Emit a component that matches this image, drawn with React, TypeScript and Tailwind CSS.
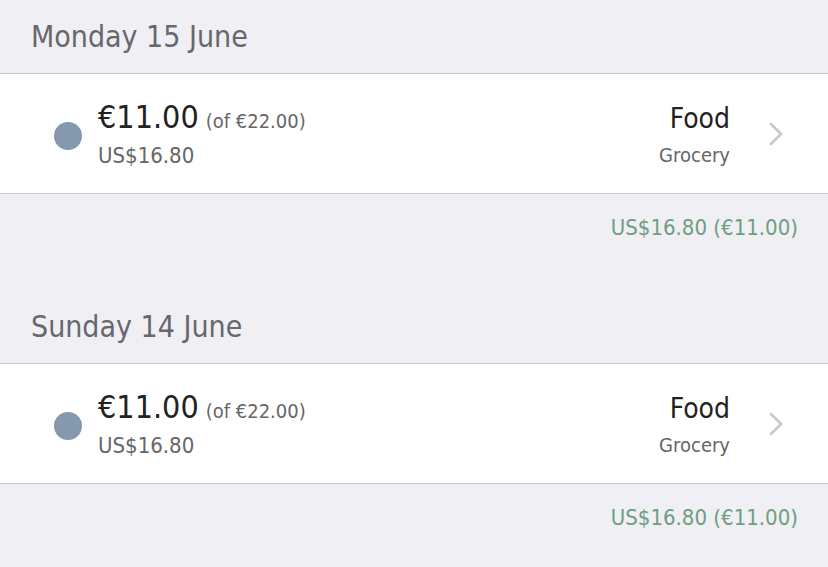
const font = { fontFamily: '"DejaVu Sans Condensed", "DejaVu Sans", sans-serif' };

function Chevron() {
  return (
    <svg width="16" height="24" viewBox="0 0 16 24" fill="none" className="shrink-0">
      <path d="M3 2l10 10-10 10" stroke="#c7c7cc" strokeWidth="2.5" strokeLinecap="round" strokeLinejoin="round" />
    </svg>
  );
}

function Day({ title }: { title: string }) {
  return (
    <section>
      <div className="h-[74px] pl-[31px] pt-[17px] border-b border-[#c8c7cc]">
        <h2 className="text-[30px] leading-[40px] text-[#67676c]">{title}</h2>
      </div>

      <div className="h-[120px] bg-white border-b border-[#c8c7cc] flex items-center pl-[54px] pr-[44px]">
        <div className="w-[28px] h-[28px] rounded-full bg-[#8599ae] mt-[4px]" />
        <div className="ml-[16px] flex-1">
          <div className="flex items-baseline">
            <span className="text-[32px] leading-[40px] text-[#222]">€11.00</span>
            <span className="ml-[7px] text-[20px] text-[#666]">(of €22.00)</span>
          </div>
          <div className="text-[22px] leading-[28px] text-[#666] mt-[5px]">US$16.80</div>
        </div>
        <div className="text-right mr-[38px] mt-[4px]">
          <div className="text-[28px] leading-[36px] text-[#222]">Food</div>
          <div className="text-[20px] leading-[30px] text-[#666] mt-[3px]">Grocery</div>
        </div>
        <Chevron />
      </div>

      <div className="h-[96px] pr-[30px] pt-[19px] text-right">
        <span className="text-[22px] leading-[30px] text-[#6e9e80] whitespace-pre">US$16.80 (€11.00)</span>
      </div>
    </section>
  );
}

export default function App() {
  return (
    <main className="w-[828px] h-[567px] overflow-hidden bg-[#efeff4]" style={font}>
      <Day title="Monday 15 June" />
      <Day title="Sunday 14 June" />
    </main>
  );
}
